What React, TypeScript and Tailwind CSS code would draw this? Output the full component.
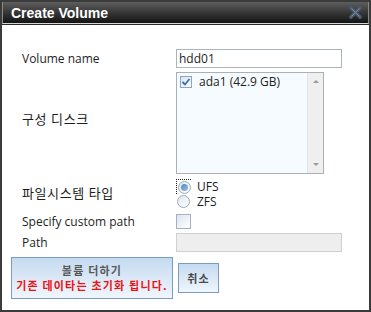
import React from 'react';

const Radio = ({ checked }: { checked?: boolean }) => (
  <span className="w-[13px] h-[13px] rounded-full border border-[#9eacbc] bg-gradient-to-br from-[#dfe7ef] to-white flex items-center justify-center">
    {checked && <span className="w-[7px] h-[7px] rounded-full bg-gradient-to-br from-[#4f86bd] to-[#9cc1e3]" />}
  </span>
);

export default function App() {
  return (
    <div className="w-[371px] h-[312px] box-border border-2 border-[#3b3b3b] bg-white flex flex-col font-['Open_Sans','Noto_Sans_CJK_KR',sans-serif] text-[12px] text-[#1e1e1e]">
      {/* title bar */}
      <div className="h-[22px] shrink-0 flex items-center justify-between pl-[8px] pr-[6px] border-x border-b border-x-[#8a8a8a] border-b-[#d6d6d6] bg-gradient-to-b from-[#5e5e5e] to-[#141414]">
        <span className="font-['Liberation_Sans',sans-serif] font-bold text-[14px] text-white leading-none pt-[1px]">Create Volume</span>
        <svg width="13" height="13" viewBox="0 0 13 13">
          <path d="M2 2 L11 11 M11 2 L2 11" stroke="#4c5a6d" strokeWidth="3.6" strokeLinecap="square" />
          <path d="M2.5 2.5 L10.5 10.5 M10.5 2.5 L2.5 10.5" stroke="#7d8ca0" strokeWidth="1" />
        </svg>
      </div>
      <div className="h-px shrink-0 bg-[#2a2a2a]" />

      <div className="flex flex-col pl-[20px]">
        {/* volume name */}
        <div className="mt-[24px] flex items-center h-[19px]">
          <span className="w-[154px]">Volume name</span>
          <div className="w-[166px] h-[19px] border border-[#abb3bd] pl-[2px] flex items-center leading-none">hdd01</div>
        </div>

        {/* disks */}
        <div className="mt-[4px] flex items-center">
          <span className="w-[154px] mb-[6px] text-[13px] tracking-[0.6px]">구성 디스크</span>
          <div className="w-[148px] h-[102px] border border-[#a9b0ba] bg-[#f6fbff] flex">
            <div className="flex-1 pt-[3px] pl-[3px]">
              <div className="flex items-center gap-[7px] h-[12px]">
                <span className="w-[12px] h-[12px] border border-[#8ea5bd] bg-gradient-to-br from-[#d9e4ef] to-white flex items-center justify-center">
                  <svg width="10" height="10" viewBox="0 0 10 10">
                    <path d="M1.5 5 L4 7.5 L8.5 2" stroke="#3470b5" strokeWidth="1.8" fill="none" />
                  </svg>
                </span>
                <span className="leading-none">ada1 (42.9 GB)</span>
              </div>
            </div>
            <div className="w-[16px] bg-[#efefef] border-l border-[#e4e4e4] flex flex-col justify-between items-center py-[7px]">
              <span className="w-0 h-0 border-x-[3px] border-x-transparent border-b-[3px] border-b-[#9a9a9a]" />
              <span className="w-0 h-0 border-x-[3px] border-x-transparent border-t-[3px] border-t-[#9a9a9a]" />
            </div>
          </div>
        </div>

        {/* fs type */}
        <div className="mt-[5px] flex items-center h-[30px]">
          <span className="w-[154px] text-[13px] tracking-[0.6px]">파일시스템 타입</span>
          <div className="flex flex-col">
            <div className="flex items-center h-[15px] gap-[6px]">
              <span className="w-[15px] h-[15px] border-t border-l border-dotted border-[#222] flex items-center justify-center">
                <Radio checked />
              </span>
              <span className="leading-[15px]">UFS</span>
            </div>
            <div className="flex items-center h-[15px] gap-[6px]">
              <span className="w-[15px] h-[15px] flex items-center justify-center">
                <Radio />
              </span>
              <span className="leading-[15px]">ZFS</span>
            </div>
          </div>
        </div>

        {/* custom path */}
        <div className="mt-[5px] flex items-center h-[15px]">
          <span className="w-[154px]">Specify custom path</span>
          <span className="w-[15px] h-[15px] border border-[#a3b2c3] bg-gradient-to-br from-[#dbe5ef] to-white" />
        </div>

        {/* path */}
        <div className="mt-[4px] flex items-center h-[19px]">
          <span className="w-[154px]">Path</span>
          <div className="w-[166px] h-[19px] border border-[#d0d0d0] bg-[#eeeeee]" />
        </div>
      </div>

      {/* buttons */}
      <div className="mt-[5px] pl-[9px] flex items-center gap-[5px] font-['Noto_Sans_CJK_KR',sans-serif] font-bold text-[11px] tracking-[1.2px]">
        <button className="w-[162px] h-[42px] border border-[#7c9cbf] bg-gradient-to-b from-[#c5daf0] to-[#f0f6fd] flex flex-col items-center justify-center leading-[15px]">
          <span className="text-[#585858]">볼륨 더하기</span>
          <span className="text-[#ee1111]">기존 데이타는 초기화 됩니다.</span>
        </button>
        <button className="w-[41px] h-[30px] border border-[#7c9cbf] bg-gradient-to-b from-[#c5daf0] to-[#f0f6fd] text-[#4a4a4a] flex items-center justify-center">
          취소
        </button>
      </div>
    </div>
  );
}
